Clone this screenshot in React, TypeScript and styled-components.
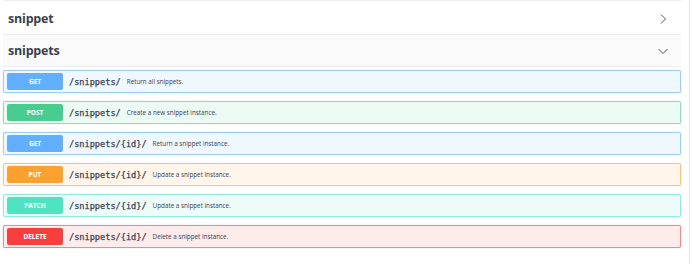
import React from "react";
import styled, { createGlobalStyle } from "styled-components";

const GlobalStyle = createGlobalStyle`
	html, body {
		margin: 0;
		padding: 0;
		background: #fff;
	}
	body {
		font-family: "Open Sans", "Noto Sans", sans-serif;
		color: #3b4151;
	}
`;

const methodColors: Record<string, string> = {
	GET: "#61affe",
	POST: "#49cc90",
	PUT: "#fca130",
	PATCH: "#50e3c2",
	DELETE: "#f93e3e",
};

const Page = styled.div`
	width: 693px;
	height: 264px;
	box-sizing: border-box;
	display: flex;
`;

const Main = styled.div`
	width: 678px;
	margin-left: 3px;
	padding-top: 2px;
	border-top: 1px solid #f0f0f0;
	box-sizing: border-box;
`;

const Gutter = styled.div`
	margin-left: 8px;
	width: 1px;
	background: #e4e4e4;
`;

const TagRow = styled.div<{ $shade?: boolean }>`
	height: 31px;
	display: flex;
	align-items: center;
	justify-content: space-between;
	padding: 0 12px 0 5px;
	background: ${(p) => (p.$shade ? "#fafafa" : "#fff")};
	border-bottom: 1px solid #ececec;
`;

const TagName = styled.h4`
	margin: 0;
	font-size: 12.5px;
	font-weight: 700;
	color: #3b4151;
	letter-spacing: -0.2px;
`;

const OpList = styled.div`
	display: flex;
	flex-direction: column;
	gap: 8px;
	padding-top: 3px;
`;

const Op = styled.div<{ $color: string }>`
	height: 23px;
	box-sizing: border-box;
	display: flex;
	align-items: center;
	gap: 6px;
	padding: 0 3px;
	border: 1px solid ${(p) => p.$color}99;
	border-radius: 2px;
	background: ${(p) => p.$color}1a;
	box-shadow: 0 0 2px rgba(0, 0, 0, 0.12);
`;

const Method = styled.span<{ $color: string }>`
	width: 56px;
	height: 17px;
	display: flex;
	align-items: center;
	justify-content: center;
	border-radius: 2px;
	background: ${(p) => p.$color};
	color: #fff;
	font-size: 6.5px;
	font-weight: 700;
`;

const Path = styled.span`
	font-family: "DejaVu Sans Mono", "Liberation Mono", monospace;
	font-size: 8.6px;
	font-weight: 400;
	color: #3b4151;
	-webkit-text-stroke: 0.25px #3b4151;
`;

const Summary = styled.span`
	font-size: 6.3px;
	color: #3b4151;
`;

const Chevron = ({ down }: { down?: boolean }) => (
	<svg width="12" height="12" viewBox="0 0 12 12" fill="none" stroke="#555" strokeWidth="1">
		{down ? <path d="M1.5 4 L6 8.5 L10.5 4" /> : <path d="M4 1.5 L8.5 6 L4 10.5" />}
	</svg>
);

const ops = [
	{ method: "GET", path: "/snippets/", summary: "Return all snippets." },
	{ method: "POST", path: "/snippets/", summary: "Create a new snippet instance." },
	{ method: "GET", path: "/snippets/{id}/", summary: "Return a snippet instance." },
	{ method: "PUT", path: "/snippets/{id}/", summary: "Update a snippet instance." },
	{ method: "PATCH", path: "/snippets/{id}/", summary: "Update a snippet instance." },
	{ method: "DELETE", path: "/snippets/{id}/", summary: "Delete a snippet instance." },
];

const App = () => {
	return (
		<>
			<GlobalStyle />
			<Page>
				<Main>
					<TagRow>
						<TagName>snippet</TagName>
						<Chevron />
					</TagRow>
					<TagRow $shade>
						<TagName>snippets</TagName>
						<Chevron down />
					</TagRow>
					<OpList>
						{ops.map((op, i) => (
							<Op key={i} $color={methodColors[op.method]}>
								<Method $color={methodColors[op.method]}>{op.method}</Method>
								<Path>{op.path}</Path>
								<Summary>{op.summary}</Summary>
							</Op>
						))}
					</OpList>
				</Main>
				<Gutter />
			</Page>
		</>
	);
};

export default App;
